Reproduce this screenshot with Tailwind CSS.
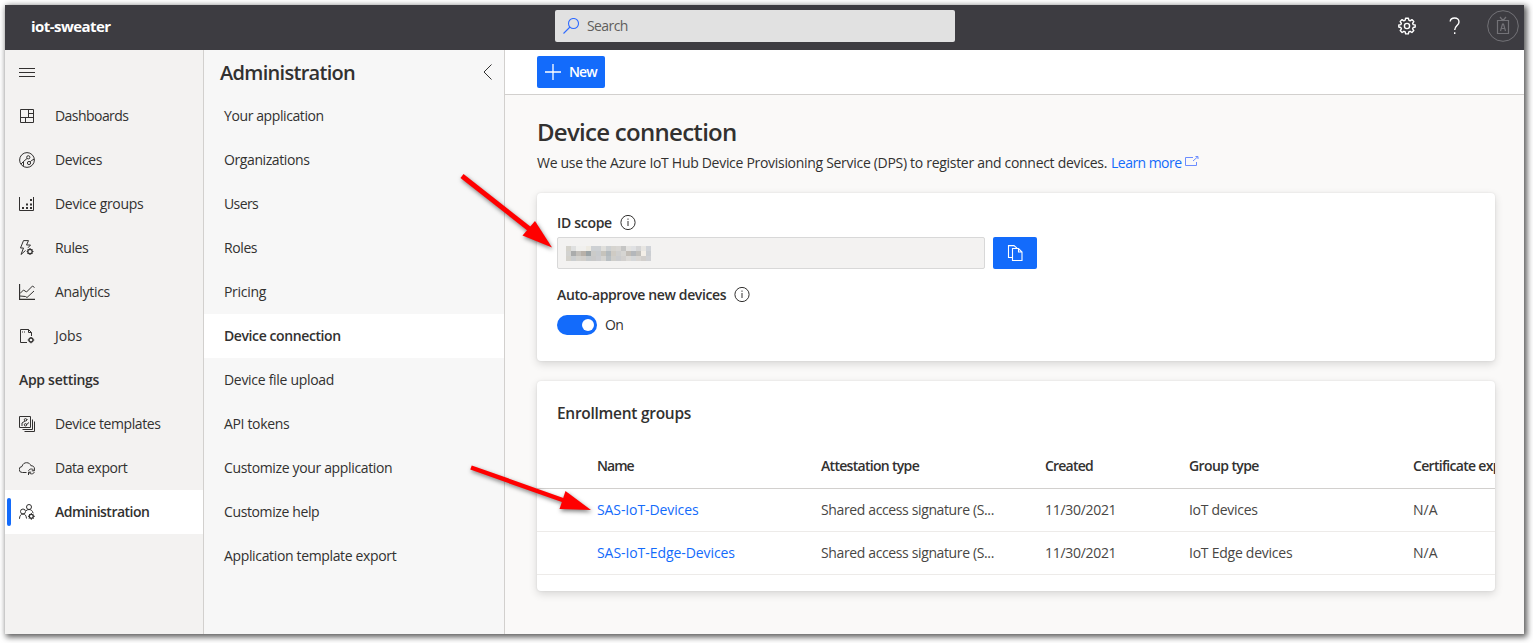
<!DOCTYPE html>
<html lang="en">
<head>
<meta charset="utf-8">
<title>iot-sweater</title>
<script src="https://cdn.jsdelivr.net/npm/@tailwindcss/browser@4"></script>
</head>
<body class="relative h-[643px] w-[1533px] overflow-hidden bg-white pt-[5px] pl-[5px] font-['Open_Sans','Noto_Sans',sans-serif] text-sm text-[#323130]">
<div class="flex h-[629px] w-[1519px] flex-col bg-[#faf9f8] shadow-[2px_2px_6px_1px_rgba(0,0,0,0.65)]">

  <header class="flex h-[45px] shrink-0 items-center bg-[#3d3c41] text-white">
    <div class="-mt-[2px] w-[550px] pl-[26px] text-[15px] font-bold tracking-[-0.55px]"><span>iot-sweater</span></div>
    <div class="-mt-[3px] flex h-8 w-[400px] items-center gap-2 rounded-[2px] bg-[#e1e1e1] pl-2 text-[#605e5c]">
      <svg class="h-4 w-4" viewBox="0 0 16 16" fill="none" stroke="#2f6bff" stroke-width="1.1"><circle cx="10.5" cy="5.5" r="5"/><path d="M7 9 .5 15.5"/></svg>
      <span class="tracking-[-0.6px]">Search</span>
    </div>
    <div class="-mt-[3px] flex flex-1 items-center justify-end pr-[5px]">
      <svg class="mr-[33px] h-[18px] w-[18px]" viewBox="0 0 18 18" fill="none" stroke="#fff" stroke-width="1.4" stroke-linejoin="round"><path d="M7.6 1.2h2.8l.4 2 1.3.6 1.8-1.2 1.9 1.9-1.2 1.8.6 1.3 2 .4v2l-2 .5-.6 1.3 1.2 1.8-1.9 1.9-1.8-1.2-1.3.6-.4 2H7.600l-.4-2-1.300-.6-1.800 1.200-1.900-1.900 1.200-1.800-.6-1.300-2-.5V8l2-.4.6-1.300-1.200-1.800 1.900-1.900 1.800 1.200 1.300-.6z"/><circle cx="9" cy="9" r="2.600"/></svg>
      <svg class="mr-[26px] h-[18px] w-3" viewBox="0 0 12 18" fill="none" stroke="#fff" stroke-width="1.400"><path d="M1.200 4.500C1.400 2.300 3 1 5.600 1c2.700 0 4.400 1.500 4.400 3.900 0 3.600-4.300 3.700-4.300 8.100"/><path d="M5.700 15.300v1.700"/></svg>
      <svg class="h-8 w-8" viewBox="0 0 32 32" fill="none" stroke="#737277"><circle cx="16" cy="16" r="15.300"/><path d="M10.500 10.500h11v13h-11zM13 7l3 3.500L19 7M13.500 21l2-7h1l2 7M14 18.500h4" stroke-width="1.200"/></svg>
    </div>
  </header>

  <div class="flex min-h-0 flex-1">
    <nav class="flex w-[199px] shrink-0 flex-col border-r border-[#d2d0ce] bg-[#f3f2f1]">
      <div class="flex h-11 items-center pl-[14px]">
        <svg class="h-4 w-4" viewBox="0 0 16 16" stroke="#323130"><path d="M0 4.500h16M0 8.500h16M0 12.500h16"/></svg>
      </div>
      <a class="flex h-11 items-center gap-5 pl-[14px]">
        <svg class="h-4 w-4" viewBox="0 0 16 16" fill="none" stroke="#323130"><path d="M1.500 1.500h13v13h-13zM9.500 1.500v8M1.500 9.500h13M9.500 5.500h5M6.500 9.500v5"/></svg>
        <span class="tracking-[-0.55px]">Dashboards</span></a>
      <a class="flex h-11 items-center gap-5 pl-[14px]">
        <svg class="h-4 w-4" viewBox="0 0 16 16" fill="none" stroke="#323130"><circle cx="8" cy="8" r="7.400"/><circle cx="9.300" cy="5.300" r="1.600"/><circle cx="10" cy="11" r="1.600"/><path d="M4.500 13.800V9.500L8 6.500M11.200 9.800l1.600-1.500 2.300-1M4.500 9.500 2 12"/></svg>
        <span class="tracking-[-0.4px]">Devices</span></a>
      <a class="flex h-11 items-center gap-5 pl-[14px]">
        <svg class="h-4 w-4" viewBox="0 0 16 16" fill="none" stroke="#323130"><path d="M.5 1v13.500h14V1"/><path d="M3 12h2M7 12h2M11 12h2M7 8.500h2M11 8.500h2M11 4h2" stroke-width="2"/></svg>
        <span class="tracking-[-0.3px]">Device groups</span></a>
      <a class="flex h-11 items-center gap-5 pl-[14px]">
        <svg class="h-4 w-4" viewBox="0 0 16 16" fill="none" stroke="#323130"><path d="M4.500.600h5L7.500 5h4L9 7.800M4.500.600 1.500 8h3L2 14.500l4.500-4"/><circle cx="11" cy="11.500" r="2.200" stroke-width="1.300"/><path d="M11 8v1.300M11 13.700V15M7.700 11.500H9M13 11.500h1.500M8.700 9.200l.8.8M12.600 13l.8.800M13.400 9.200l-.8.800M9.400 13l-.8.800"/></svg>
        <span class="tracking-[-0.4px]">Rules</span></a>
      <a class="flex h-11 items-center gap-5 pl-[14px]">
        <svg class="h-4 w-4" viewBox="0 0 16 16" fill="none" stroke="#323130"><path d="M.5 0v15.500H16" stroke-width="1.300"/><path d="M1 9.500 4.500 6l3 2L13.500 2l2 1.500M1 12l5.500.5 1.500 1 7-6.500"/></svg>
        <span class="tracking-[-0.3px]">Analytics</span></a>
      <a class="flex h-11 items-center gap-5 pl-[14px]">
        <svg class="h-4 w-4" viewBox="0 0 16 16" fill="none" stroke="#323130"><path d="M8 14.500H1.500v-13h8l3 3V8M9.500 1.500v3h3"/><path d="M3 4h4" stroke-dasharray="1 1"/><circle cx="12" cy="12" r="2"  stroke-width="1.300"/><path d="M12 9v1M12 14v1.300M8.700 12H10M14 12h1.300"/></svg>
        <span class="tracking-[-0.1px]">Jobs</span></a>
      <div class="flex h-11 items-center pl-[14px] font-semibold"><span class="tracking-[-0.3px]">App settings</span></div>
      <a class="flex h-11 items-center gap-5 pl-[14px]">
        <svg class="h-4 w-4" viewBox="0 0 16 16" fill="none" stroke="#323130"><path d="M.500.500h11v11H.500zM3.500 13.500h10v-10M5.500 15.500h10v-10"/><path d="M3 10V7l3-2M8.500 3.500l-1.500 1M7 9l3-2.500"/><circle cx="6.500" cy="3.800" r="1.200"/><circle cx="6.500" cy="8.800" r="1.200"/></svg>
        <span class="tracking-[-0.4px]">Device templates</span></a>
      <a class="flex h-11 items-center gap-5 pl-[14px]">
        <svg class="h-4 w-4" viewBox="0 0 16 16" fill="none" stroke="#323130"><path d="M7.500 12.500H3.500a3 3 0 0 1-.5-6 C3.600 3.800 5.600 2.700 7.600 2.700c2.200 0 3.700 1.200 4.300 3 1.900 0 3 .8 3.500 2.100"/><path d="M9.500 10.800c.6-1.300 1.600-1.800 2.800-1.800 1 0 1.800.4 2.700 1.500M15.400 8v2.800h-2.600M15.400 12c-.6 1.300-1.600 1.900-2.800 1.900-1 0-1.900-.5-2.700-1.500M9.500 15v-2.800h2.600"/></svg>
        <span class="tracking-[-0.45px]">Data export</span></a>
      <a class="flex h-11 items-center bg-white pl-[2px] font-semibold">
        <span class="mr-2 h-7 w-1 rounded-[2px] bg-[#136bfb]"></span>
        <svg class="mr-5 h-4 w-4" viewBox="0 0 16 16" fill="none" stroke="#323130"><circle cx="10" cy="3" r="2.500"/><circle cx="4" cy="7.500" r="2.500"/><path d="M.5 14.800c0-3 1.500-4.800 3.500-4.800s3.300 1.500 3.500 4.500M7 6.800C7.800 6 8.800 5.500 10 5.500c2 0 3.600 1.300 4 3.500"/><circle cx="12.300" cy="12.300" r="2" stroke-width="1.300"/><path d="M12.300 9v1.300M12.300 14.300v1.500M9 12.300h1.300M14.300 12.300h1.600M10 10l.9.900M13.700 13.700l.9.900M14.600 10l-.9.900M10.900 13.700l-.9.900"/></svg>
        <span class="tracking-[-0.5px]">Administration</span></a>
    </nav>

    <nav class="flex w-[301px] shrink-0 flex-col border-r border-[#d2d0ce] bg-[#f7f7f7]">
      <div class="flex h-11 items-center justify-between pr-[11px] pl-4">
        <h2 class="mt-[2px] text-[20px] font-semibold tracking-[-0.7px]">Administration</h2>
        <svg class="h-4 w-[10px]" viewBox="0 0 10 16" fill="none" stroke="#323130"><path d="M8.500.5 1 8l7.500 7.500"/></svg>
      </div>
      <a class="flex h-11 items-center pl-5"><span class="tracking-[-0.4px]">Your application</span></a>
      <a class="flex h-11 items-center pl-5"><span class="tracking-[-0.4px]">Organizations</span></a>
      <a class="flex h-11 items-center pl-5"><span class="tracking-[-0.6px]">Users</span></a>
      <a class="flex h-11 items-center pl-5"><span class="tracking-[-0.4px]">Roles</span></a>
      <a class="flex h-11 items-center pl-5"><span class="tracking-[-0.3px]">Pricing</span></a>
      <a class="flex h-11 items-center bg-white pl-5 font-semibold"><span class="tracking-[-0.4px]">Device connection</span></a>
      <a class="flex h-11 items-center pl-5"><span class="tracking-[-0.3px]">Device file upload</span></a>
      <a class="flex h-11 items-center pl-5"><span class="tracking-[-0.35px]">API tokens</span></a>
      <a class="flex h-11 items-center pl-5"><span class="tracking-[-0.35px]">Customize your application</span></a>
      <a class="flex h-11 items-center pl-5"><span class="tracking-[-0.38px]">Customize help</span></a>
      <a class="flex h-11 items-center pl-5"><span class="tracking-[-0.35px]">Application template export</span></a>
    </nav>

    <main class="flex min-w-0 flex-1 flex-col">
      <div class="flex h-[45px] shrink-0 items-center border-b border-[#d2d0ce] bg-white pl-8">
        <button class="flex h-8 w-[68px] items-center gap-2 rounded-[2px] bg-[#136bfb] pl-2 font-semibold text-white">
          <svg class="h-4 w-4" viewBox="0 0 16 16" stroke="#fff" stroke-width="1.300"><path d="M8 0v16M0 8h16"/></svg>
          <span class="tracking-[-0.9px]">New</span>
        </button>
      </div>
      <div class="flex flex-col pr-[29px] pl-8">
        <h1 class="mt-[21px] text-[24px] leading-8 font-semibold tracking-[-0.72px]"><span>Device connection</span></h1>
        <p class="mt-[5px] flex h-5 items-center whitespace-nowrap"><span class="tracking-[-0.3px]">We use the Azure IoT Hub Device Provisioning Service (DPS) to register and connect devices.</span><a class="ml-1 flex items-center gap-1 text-[#136bfb]"><span class="tracking-[-0.55px]">Learn more</span>
          <svg class="-mt-[4px] h-[11px] w-[14px]" viewBox="0 0 14 11" fill="none" stroke="#6b8cff"><path d="M8 1.500H.500v8h11V6M8 5l5-4.500M10.500.500H13V3"/></svg></a></p>

        <section class="mt-5 flex h-[168px] flex-col rounded-[4px] bg-white pl-5 shadow-[0_3px_8px_rgba(0,0,0,0.14),0_0_2px_rgba(0,0,0,0.1)]">
          <div class="mt-5 flex h-5 items-center gap-2 font-semibold"><span class="tracking-[-0.3px]">ID scope</span>
            <svg class="h-4 w-4" viewBox="0 0 16 16" fill="none" stroke="#323130"><circle cx="8" cy="7.500" r="7.100"/><path d="M8 6v5M8 3.500v1.300"/></svg></div>
          <div class="mt-1 flex gap-2">
            <div class="h-8 w-[428px] rounded-[2px] border border-[#d8d8d8] bg-[#f3f2f1] pt-2 pl-2">
              <svg class="h-[15px] w-[85px]" viewBox="0 0 17 3" shape-rendering="crispEdges"><g id="mosaic"></g></svg>
            </div>
            <button class="flex h-8 w-11 items-center justify-center rounded-[2px] bg-[#136bfb]">
              <svg class="h-4 w-4" viewBox="0 0 16 16" fill="none" stroke="#fff" stroke-width="1.100"><path d="M5 12.500H1.500V.600h5.500l3 2.500"/><path d="M5.500 3.500h6l3.500 3.500v8.500H5.500zM11.500 3.500v3.500h3.500"/></svg>
            </button>
          </div>
          <div class="mt-4 flex h-5 items-center gap-2 font-semibold"><span class="tracking-[-0.37px]">Auto-approve new devices</span>
            <svg class="h-4 w-4" viewBox="0 0 16 16" fill="none" stroke="#323130"><circle cx="8" cy="7.500" r="7.100"/><path d="M8 6v5M8 3.500v1.300"/></svg></div>
          <div class="mt-[10px] flex h-5 items-center gap-2">
            <div class="flex h-5 w-10 items-center justify-end rounded-full bg-[#136bfb] pr-[3px]"><div class="h-3 w-3 rounded-full bg-white"></div></div>
            <span class="tracking-[-0.6px]">On</span></div>
        </section>

        <section class="mt-5 flex h-[210px] flex-col overflow-hidden rounded-[4px] bg-white shadow-[0_3px_8px_rgba(0,0,0,0.14),0_0_2px_rgba(0,0,0,0.1)]">
          <h3 class="mt-5 h-6 pl-5 text-[15.5px] leading-6 font-semibold"><span class="tracking-[-0.28px]">Enrollment groups</span></h3>
          <div class="mt-[19px] grid h-[45px] w-[1056px] shrink-0 grid-cols-[224px_224px_144px_224px_180px] items-center border-b border-[#d2d0ce] pl-[60px] font-semibold whitespace-nowrap">
            <span class="tracking-[-0.95px]">Name</span><span class="tracking-[-0.7px]">Attestation type</span><span class="tracking-[-0.8px]">Created</span><span class="tracking-[-0.6px]">Group type</span><span class="tracking-[-0.7px]">Certificate expiry</span>
          </div>
          <div class="grid h-[43px] w-[1056px] shrink-0 grid-cols-[224px_224px_144px_224px_180px] items-center border-b border-[#edebe9] pl-[60px] whitespace-nowrap text-[#484644]">
            <span class="tracking-[-0.1px] text-[#136bfb]">SAS-IoT-Devices</span><span class="tracking-[-0.37px]">Shared access signature (S...</span><span class="tracking-[-0.3px]">11/30/2021</span><span class="tracking-[-0.3px]">IoT devices</span><span>N/A</span>
          </div>
          <div class="grid h-[43px] w-[1056px] shrink-0 grid-cols-[224px_224px_144px_224px_180px] items-center border-b border-[#edebe9] pl-[60px] whitespace-nowrap text-[#484644]">
            <span class="tracking-[-0.07px] text-[#136bfb]">SAS-IoT-Edge-Devices</span><span class="tracking-[-0.37px]">Shared access signature (S...</span><span class="tracking-[-0.3px]">11/30/2021</span><span class="tracking-[-0.25px]">IoT Edge devices</span><span>N/A</span>
          </div>
        </section>
      </div>
    </main>
  </div>
</div>

<svg class="pointer-events-none absolute top-0 left-0 h-[643px] w-[1533px] drop-shadow-[1px_2px_2px_rgba(0,0,0,0.5)]" viewBox="0 0 1533 643" fill="#f00" stroke="#f00">
  <path d="M462 176 532 231" stroke-width="5"/><path stroke="none" d="M535 221 522.500 235.500 552 247.500z"/>
  <path d="M471 467.500 564 500.500" stroke-width="4.500"/><path stroke="none" d="M565.500 491 559.500 509 591 510z"/>
</svg>

<script>
  // Obscured ID value: three rows of colour cells
  const rows = [
    "d4d2cb dfe0e0 f0f0ee f1f0ee eeebe3 cdd0d3 cdd0d3 e0dfdb cdd0d2 d6d4cf d8d6d3 c5c5c4 e4e3e1 e0e1e3 d5d5d6 e8e6e2 d0d3d8",
    "d2d2d0 aaacac c2bfba b8b1a9 9ba3a6 cbcbc9 c8cbce c6c3bc b2b9bd cfcbc4 cfcfce d6d5d2 c2bdb6 b4b7bb c1bfbb f3eee7 cbced2",
    "d3d1cb cbced0 d3d2ce d2cfcb c6cacc c9c9c9 cbcccf d5d4d1 b9bfc3 cfceca cbccce d2d0ce dcdad7 d5d7d9 d9d6d3 d2cfcc d0d1d4"
  ];
  const g = document.getElementById("mosaic");
  rows.forEach((row, y) => row.split(" ").forEach((c, x) => {
    const r = document.createElementNS("http://www.w3.org/2000/svg", "rect");
    for (const [k, v] of Object.entries({ x, y, width: 1, height: 1, fill: "#" + c, stroke: "none" })) r.setAttribute(k, v);
    g.appendChild(r);
  }));
</script>
</body>
</html>
